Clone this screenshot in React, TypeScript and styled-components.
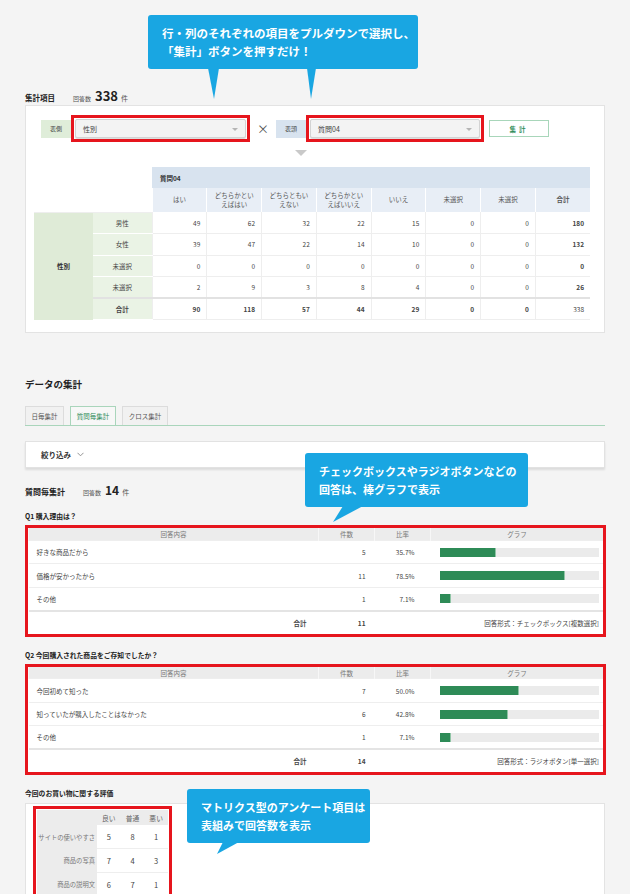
import React from 'react';
import styled, { createGlobalStyle } from 'styled-components';

const GlobalStyle = createGlobalStyle`
  html, body {
    margin: 0;
    padding: 0;
    background: #f4f4f4;
  }
  body {
    font-family: "Noto Sans CJK JP", "Noto Sans", sans-serif;
    color: #333;
  }
  * {
    box-sizing: border-box;
  }
`;

const Page = styled.div`
  position: relative;
  width: 630px;
  padding: 0 25px 0;
`;

// 吹き出し（注釈）
const Callout = styled.div<{ $w: number; $size?: number }>`
  position: relative;
  width: ${({ $w }) => $w}px;
  background: #19a6e2;
  color: #fff;
  font-weight: 700;
  font-size: ${({ $size }) => $size ?? 11}px;
  line-height: 18px;
  border-radius: 3px;
  padding: 9px 14px;
  white-space: nowrap;
`;

const FloatingCallout = styled(Callout)<{ $top: number; $left: number }>`
  position: absolute;
  top: ${({ $top }) => $top}px;
  left: ${({ $left }) => $left}px;
  z-index: 3;
`;

const Tail = styled.svg`
  position: absolute;
  top: 100%;
  left: 0;
  overflow: visible;
`;

const TopNote = styled.div`
  padding-top: 15px;
  padding-left: 123px;
`;

const SectionHead = styled.div<{ $mt: number }>`
  display: flex;
  align-items: baseline;
  height: 14px;
  margin-top: ${({ $mt }) => $mt}px;
`;

const HeadTitle = styled.span<{ $size?: number }>`
  font-size: ${({ $size }) => $size ?? 8}px;
  font-weight: 700;
  color: #222;
  margin-right: 18px;
`;

const CountLabel = styled.span`
  font-size: 6px;
  color: #555;
  margin-right: 4px;
`;

const CountNum = styled.span<{ $size: number }>`
  font-size: ${({ $size }) => $size}px;
  font-weight: 700;
  color: #222;
  margin-right: 3px;
`;

const CountUnit = styled.span`
  font-size: 7px;
  color: #555;
`;

const Card = styled.div`
  margin-top: 5px;
  background: #fff;
  border: 1px solid #e3e3e3;
  padding: 9px 0 12px;
`;

const SelectRow = styled.div`
  display: flex;
  align-items: center;
  padding-left: 15px;
`;

const AxisLabel = styled.div<{ $tone: 'row' | 'col' }>`
  width: 30px;
  height: 18px;
  display: flex;
  align-items: center;
  justify-content: center;
  font-size: 6px;
  color: #444;
  background: ${({ $tone }) => ($tone === 'row' ? '#dfedd9' : '#d8e3ef')};
`;

// 赤枠のハイライト
const Highlight = styled.div<{ $w: number }>`
  width: ${({ $w }) => $w}px;
  border: 3px solid #e6151d;
  padding: 1px;
  background: #fff;
`;

const Select = styled.div`
  position: relative;
  height: 19px;
  display: flex;
  align-items: center;
  padding-left: 7px;
  background: #f3f3f3;
  border: 1px solid #d3d3d3;
  border-radius: 2px;
  box-shadow: 0 1px 1px rgba(0, 0, 0, 0.15);
  font-size: 7px;
  color: #444;
  &::after {
    content: '';
    position: absolute;
    right: 7px;
    top: 8px;
    border-left: 3px solid transparent;
    border-right: 3px solid transparent;
    border-top: 3px solid #b5b5b5;
  }
`;

const Times = styled.div`
  width: 26px;
  text-align: center;
  font-size: 12px;
  color: #555;
`;

const SubmitButton = styled.button`
  margin-left: 5px;
  width: 60px;
  height: 17px;
  padding: 0;
  background: #fff;
  border: 1px solid #a8d6ba;
  color: #2f8c5a;
  font-family: inherit;
  font-size: 6.5px;
  font-weight: 700;
  letter-spacing: 3px;
`;

const DownArrow = styled.div`
  width: 0;
  height: 0;
  margin: 8px 0 11px 269px;
  border-left: 6px solid transparent;
  border-right: 6px solid transparent;
  border-top: 6px solid #c9c9c9;
`;

const CrossTable = styled.table`
  margin-left: 8px;
  width: 556px;
  border-collapse: collapse;
  table-layout: fixed;
  font-size: 6.5px;
  color: #444;
`;

const CornerCell = styled.th`
  background: #fff;
  border-bottom: 1px solid #eee;
`;

const GroupHead = styled.th`
  height: 21px;
  background: #d8e3ef;
  text-align: left;
  padding-left: 8px;
  font-weight: 700;
  color: #333;
`;

const ColHead = styled.th<{ $bold?: boolean }>`
  height: 24px;
  background: #e8eef6;
  border-left: 1px solid #fff;
  font-weight: ${({ $bold }) => ($bold ? 700 : 400)};
  line-height: 1.4;
  color: #555;
`;

const SideHead = styled.th`
  background: #dfebd7;
  font-weight: 700;
  color: #333;
`;

const SubHead = styled.th<{ $total?: boolean }>`
  height: 21.6px;
  background: #eaf3e5;
  font-weight: ${({ $total }) => ($total ? 700 : 400)};
  color: #444;
  border-bottom: 1px solid #fff;
  border-top: ${({ $total }) => ($total ? '2px solid #e2e2e2' : 'none')};
`;

const NumCell = styled.td<{ $bold?: boolean; $total?: boolean }>`
  text-align: right;
  padding-right: 6px;
  border-left: 1px solid #eee;
  border-bottom: 1px solid #eee;
  border-top: ${({ $total }) => ($total ? '2px solid #e2e2e2' : 'none')};
  font-weight: ${({ $bold }) => ($bold ? 700 : 400)};
  color: #444;
`;

const DataHeading = styled.h2`
  margin: 44px 0 0;
  height: 14px;
  line-height: 14px;
  font-size: 9.5px;
  font-weight: 700;
  color: #222;
`;

const Tabs = styled.div`
  display: flex;
  gap: 6px;
  margin-top: 15px;
  height: 20px;
  border-bottom: 1px solid #a9d5bb;
`;

const Tab = styled.div<{ $active?: boolean; $w: number }>`
  width: ${({ $w }) => $w}px;
  display: flex;
  align-items: center;
  justify-content: center;
  font-size: 6.5px;
  color: ${({ $active }) => ($active ? '#2f8c5a' : '#555')};
  background: ${({ $active }) => ($active ? '#f7f7f7' : '#f1f1f1')};
  border: 1px solid ${({ $active }) => ($active ? '#a9d5bb' : '#dcdcdc')};
  border-bottom: none;
`;

const FilterBar = styled.div`
  margin-top: 15px;
  height: 27px;
  display: flex;
  align-items: center;
  gap: 6px;
  padding-left: 15px;
  background: #fff;
  border: 1px solid #e2e2e2;
  box-shadow: 0 2px 2px rgba(0, 0, 0, 0.1);
  font-size: 7.5px;
  font-weight: 700;
  color: #333;
`;

const QuestionTitle = styled.div<{ $mt: number }>`
  margin-top: ${({ $mt }) => $mt}px;
  height: 12px;
  line-height: 12px;
  font-size: 6.8px;
  font-weight: 700;
  color: #222;
`;

const ResultBox = styled(Highlight)`
  margin-top: 3px;
  padding: 0;
`;

const ResultTable = styled.table`
  width: 100%;
  border-collapse: collapse;
  table-layout: fixed;
  font-size: 6.5px;
  color: #444;
  background: #fff;
`;

const ResultHead = styled.th`
  height: 12px;
  padding: 0;
  background: #ececec;
  border-left: 1px solid #f7f7f7;
  font-weight: 400;
  color: #777;
`;

const ResultCell = styled.td<{ $align?: 'left' | 'right'; $pl?: number; $pr?: number; $bold?: boolean; $total?: boolean }>`
  height: ${({ $total }) => ($total ? 23 : 23.5)}px;
  padding: 0 ${({ $pr }) => $pr ?? 0}px 0 ${({ $pl }) => $pl ?? 0}px;
  text-align: ${({ $align }) => $align ?? 'left'};
  font-weight: ${({ $bold }) => ($bold ? 700 : 400)};
  border-top: ${({ $total }) => ($total ? '2px solid #e4e4e4' : '1px solid #eee')};
  white-space: nowrap;
`;

const BarTrack = styled.div`
  height: 9px;
  background: #ebebeb;
`;

const BarFill = styled.div`
  height: 100%;
  background: #2e8b57;
  border-right: 1px solid #8fc4a5;
`;

const MatrixCard = styled.div`
  margin-top: 4px;
  height: 120px;
  background: #fff;
  border: 1px solid #e3e3e3;
  padding: 2px 0 0 7px;
`;

const MatrixTable = styled.table`
  border-collapse: collapse;
  width: 100%;
  table-layout: fixed;
  font-size: 6.8px;
  color: #555;
`;

const MatrixHead = styled.th`
  height: 15px;
  background: #ececec;
  font-weight: 400;
  color: #666;
`;

const MatrixLabel = styled.th`
  height: 23.5px;
  background: #ececec;
  text-align: right;
  padding: 0 2px 0 0;
  font-size: 6.3px;
  font-weight: 400;
  white-space: nowrap;
  color: #777;
`;

const MatrixCell = styled.td`
  text-align: center;
  border-bottom: 1px solid #eee;
  font-size: 7.5px;
  color: #444;
`;

const crossCols: string[][] = [
  ['はい'],
  ['どちらかとい', 'えばはい'],
  ['どちらともい', 'えない'],
  ['どちらかとい', 'えばいいえ'],
  ['いいえ'],
  ['未選択'],
  ['未選択'],
];

const crossRows = [
  { label: '男性', values: [49, 62, 32, 22, 15, 0, 0], total: 180 },
  { label: '女性', values: [39, 47, 22, 14, 10, 0, 0], total: 132 },
  { label: '未選択', values: [0, 0, 0, 0, 0, 0, 0], total: 0 },
  { label: '未選択', values: [2, 9, 3, 8, 4, 0, 0], total: 26 },
];

const crossTotals = [90, 118, 57, 44, 29, 0, 0, 338];

type Answer = { label: string; count: number; ratio: number };

const questions: { title: string; answers: Answer[]; total: number; format: string }[] = [
  {
    title: 'Q1 購入理由は？',
    answers: [
      { label: '好きな商品だから', count: 5, ratio: 35.7 },
      { label: '価格が安かったから', count: 11, ratio: 78.5 },
      { label: 'その他', count: 1, ratio: 7.1 },
    ],
    total: 11,
    format: '回答形式：チェックボックス[複数選択]',
  },
  {
    title: 'Q2 今回購入された商品をご存知でしたか？',
    answers: [
      { label: '今回初めて知った', count: 7, ratio: 50.0 },
      { label: '知っていたが購入したことはなかった', count: 6, ratio: 42.8 },
      { label: 'その他', count: 1, ratio: 7.1 },
    ],
    total: 14,
    format: '回答形式：ラジオボタン[単一選択]',
  },
];

const matrixRows = [
  { label: 'サイトの使いやすさ', values: [5, 8, 1] },
  { label: '商品の写真', values: [7, 4, 3] },
  { label: '商品の説明文', values: [6, 7, 1] },
];

const Chevron = () => (
  <svg width="7" height="5" viewBox="0 0 7 5">
    <path d="M0.5 0.8 L3.5 3.8 L6.5 0.8" fill="none" stroke="#888" strokeWidth="0.9" />
  </svg>
);

const CrossSection = () => (
  <CrossTable>
    <colgroup>
      <col style={{ width: 59 }} />
      <col style={{ width: 59 }} />
      {crossTotals.map((_, i) => (
        <col key={i} />
      ))}
    </colgroup>
    <thead>
      <tr>
        <CornerCell colSpan={2} rowSpan={2} />
        <GroupHead colSpan={8}>質問04</GroupHead>
      </tr>
      <tr>
        {crossCols.map((lines, i) => (
          <ColHead key={i}>
            {lines.map((l, j) => (
              <React.Fragment key={j}>
                {j > 0 && <br />}
                {l}
              </React.Fragment>
            ))}
          </ColHead>
        ))}
        <ColHead $bold>合計</ColHead>
      </tr>
    </thead>
    <tbody>
      {crossRows.map((row, i) => (
        <tr key={i}>
          {i === 0 && <SideHead rowSpan={5}>性別</SideHead>}
          <SubHead>{row.label}</SubHead>
          {row.values.map((v, j) => (
            <NumCell key={j}>{v}</NumCell>
          ))}
          <NumCell $bold>{row.total}</NumCell>
        </tr>
      ))}
      <tr>
        <SubHead $total>合計</SubHead>
        {crossTotals.map((v, j) => (
          <NumCell key={j} $total $bold={j < 7}>
            {v}
          </NumCell>
        ))}
      </tr>
    </tbody>
  </CrossTable>
);

const QuestionResult = ({ q, mt }: { q: (typeof questions)[number]; mt: number }) => (
  <>
    <QuestionTitle $mt={mt}>{q.title}</QuestionTitle>
    <ResultBox $w={581}>
      <ResultTable>
        <colgroup>
          <col style={{ width: 290 }} />
          <col style={{ width: 56 }} />
          <col style={{ width: 56 }} />
          <col />
        </colgroup>
        <thead>
          <tr>
            <ResultHead>回答内容</ResultHead>
            <ResultHead>件数</ResultHead>
            <ResultHead>比率</ResultHead>
            <ResultHead>グラフ</ResultHead>
          </tr>
        </thead>
        <tbody>
          {q.answers.map((a, i) => (
            <tr key={i}>
              <ResultCell $pl={8}>{a.label}</ResultCell>
              <ResultCell $align="right" $pr={9}>
                {a.count}
              </ResultCell>
              <ResultCell $align="right" $pr={16}>
                {a.ratio.toFixed(1)}%
              </ResultCell>
              <ResultCell $pl={9} $pr={4}>
                <BarTrack>
                  <BarFill style={{ width: `${a.ratio}%` }} />
                </BarTrack>
              </ResultCell>
            </tr>
          ))}
          <tr>
            <ResultCell $total $bold $align="right" $pr={12}>
              合計
            </ResultCell>
            <ResultCell $total $bold $align="right" $pr={9}>
              {q.total}
            </ResultCell>
            <ResultCell $total colSpan={2} $align="right" $pr={4}>
              {q.format}
            </ResultCell>
          </tr>
        </tbody>
      </ResultTable>
    </ResultBox>
  </>
);

const App = () => {
  return (
    <Page>
      <GlobalStyle />

      <TopNote>
        <Callout $w={270} $size={11.5}>
          行・列のそれぞれの項目をプルダウンで選択し、
          <br />
          「集計」ボタンを押すだけ！
          <Tail width="270" height="31">
            <polygon points="60,-1 71,-1 66,30" fill="#19a6e2" />
            <polygon points="159,-1 168,-1 163,30" fill="#19a6e2" />
          </Tail>
        </Callout>
      </TopNote>

      <SectionHead $mt={17}>
        <HeadTitle $size={7.5}>集計項目</HeadTitle>
        <CountLabel>回答数</CountLabel>
        <CountNum $size={13}>338</CountNum>
        <CountUnit>件</CountUnit>
      </SectionHead>

      <Card>
        <SelectRow>
          <AxisLabel $tone="row">表側</AxisLabel>
          <Highlight $w={179}>
            <Select>性別</Select>
          </Highlight>
          <Times>×</Times>
          <AxisLabel $tone="col">表頭</AxisLabel>
          <Highlight $w={178}>
            <Select>質問04</Select>
          </Highlight>
          <SubmitButton>集計</SubmitButton>
        </SelectRow>
        <DownArrow />
        <CrossSection />
      </Card>

      <DataHeading>データの集計</DataHeading>
      <Tabs>
        <Tab $w={39}>日毎集計</Tab>
        <Tab $w={46} $active>
          質問毎集計
        </Tab>
        <Tab $w={46}>クロス集計</Tab>
      </Tabs>

      <FilterBar>
        絞り込み
        <Chevron />
      </FilterBar>

      <SectionHead $mt={13}>
        <HeadTitle>質問毎集計</HeadTitle>
        <CountLabel>回答数</CountLabel>
        <CountNum $size={12}>14</CountNum>
        <CountUnit>件</CountUnit>
      </SectionHead>

      <QuestionResult q={questions[0]} mt={15} />
      <QuestionResult q={questions[1]} mt={12} />

      <QuestionTitle $mt={12}>今回のお買い物に関する評価</QuestionTitle>
      <MatrixCard>
        <Highlight $w={139}>
          <MatrixTable>
            <colgroup>
              <col style={{ width: 60 }} />
              <col />
              <col />
              <col />
            </colgroup>
            <thead>
              <tr>
                <MatrixHead />
                <MatrixHead>良い</MatrixHead>
                <MatrixHead>普通</MatrixHead>
                <MatrixHead>悪い</MatrixHead>
              </tr>
            </thead>
            <tbody>
              {matrixRows.map((r, i) => (
                <tr key={i}>
                  <MatrixLabel>{r.label}</MatrixLabel>
                  {r.values.map((v, j) => (
                    <MatrixCell key={j}>{v}</MatrixCell>
                  ))}
                </tr>
              ))}
            </tbody>
          </MatrixTable>
        </Highlight>
      </MatrixCard>

      <FloatingCallout $w={223} $top={453} $left={305}>
        チェックボックスやラジオボタンなどの
        <br />
        回答は、棒グラフで表示
        <Tail width="223" height="16">
          <polygon points="38,-1 58,-1 28,15" fill="#19a6e2" />
        </Tail>
      </FloatingCallout>

      <FloatingCallout $w={183} $top={789} $left={187}>
        マトリクス型のアンケート項目は
        <br />
        表組みで回答数を表示
        <Tail width="183" height="12">
          <polygon points="36,-1 52,-1 30,11" fill="#19a6e2" />
        </Tail>
      </FloatingCallout>
    </Page>
  );
};

export default App;
